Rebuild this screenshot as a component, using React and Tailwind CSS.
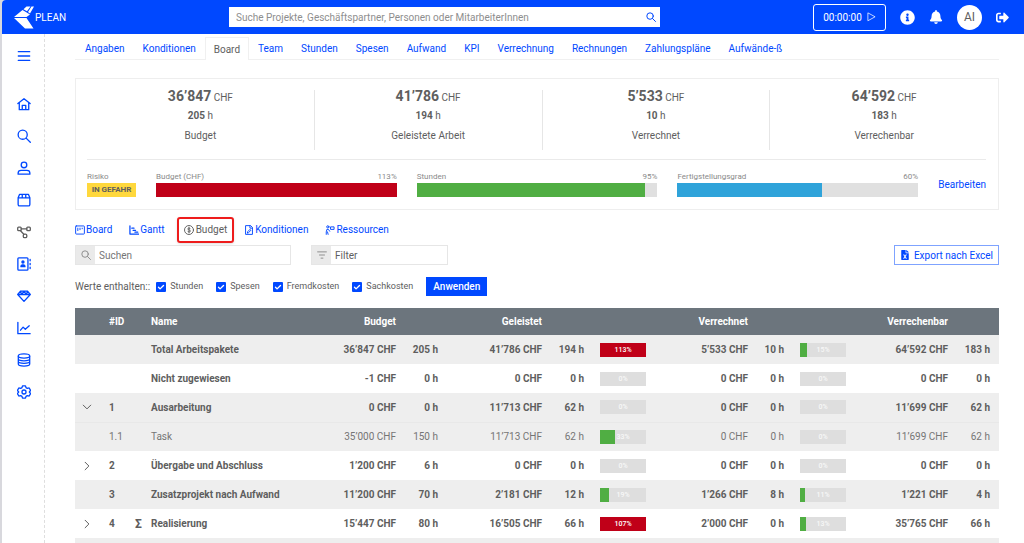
import {
  FaBell,
  FaFileExcel,
  FaInfoCircle,
  FaSignOutAlt,
} from 'react-icons/fa';

const tabs = [
  'Angaben', 'Konditionen', 'Board', 'Team', 'Stunden', 'Spesen', 'Aufwand', 'KPI',
  'Verrechnung', 'Rechnungen', 'Zahlungspläne', 'Aufwände-ß',
];

const stats = [
  { amount: '36’847', hours: '205', label: 'Budget' },
  { amount: '41’786', hours: '194', label: 'Geleistete Arbeit' },
  { amount: '5’533', hours: '10', label: 'Verrechnet' },
  { amount: '64’592', hours: '183', label: 'Verrechenbar' },
];

const progress = [
  { label: 'Budget (CHF)', value: 113, color: 'bg-[#c00018]' },
  { label: 'Stunden', value: 95, color: 'bg-[#50ae43]' },
  { label: 'Fertigstellungsgrad', value: 60, color: 'bg-[#2fa3da]' },
];

const rows = [
  { name: 'Total Arbeitspakete', budget: ['36’847', 205], done: ['41’786', 194, 113], billed: ['5’533', 10, 15], billable: ['64’592', 183], shaded: true },
  { name: 'Nicht zugewiesen', budget: ['-1', 0], done: ['0', 0, 0], billed: ['0', 0, 0], billable: ['0', 0] },
  { id: '1', name: 'Ausarbeitung', budget: ['0', 0], done: ['11’713', 62, 0], billed: ['0', 0, 0], billable: ['11’699', 62], shaded: true, open: true },
  { id: '1.1', name: 'Task', budget: ['35’000', 150], done: ['11’713', 62, 33], billed: ['0', 0, 0], billable: ['11’699', 62], shaded: true, child: true },
  { id: '2', name: 'Übergabe und Abschluss', budget: ['1’200', 6], done: ['0', 0, 0], billed: ['0', 0, 0], billable: ['0', 0], open: false },
  { id: '3', name: 'Zusatzprojekt nach Aufwand', budget: ['11’200', 70], done: ['2’181', 12, 19], billed: ['1’266', 8, 11], billable: ['1’221', 4], shaded: true },
  { id: '4', name: 'Realisierung', sum: true, budget: ['15’447', 80], done: ['16’505', 66, 107], billed: ['2’000', 0, 13], billable: ['35’765', 66], open: false },
];

function Icon({ className = 'size-3.5', width = 1.5, children }) {
  return (
    <svg
      viewBox="0 0 16 16"
      className={className}
      fill="none"
      stroke="currentColor"
      strokeWidth={width}
      strokeLinecap="round"
      strokeLinejoin="round"
      aria-hidden="true"
    >
      {children}
    </svg>
  );
}

const searchPath = (
  <>
    <circle cx="6.5" cy="6.5" r="5.2" />
    <path d="m10.4 10.4 4.8 4.8" />
  </>
);

const navItems = [
  { label: 'Start', icon: <path d="M1 7.5 8 2l7 5.5M2.6 6.5v8h10.8v-8M6 14V9.5h4V14" /> },
  { label: 'Suche', icon: searchPath },
  { label: 'Personen', icon: <><circle cx="8" cy="4.5" r="3.2" /><path d="M1.3 15v-1.2c0-1.8 1.5-3.1 3.3-3.1h6.8c1.8 0 3.3 1.3 3.3 3.1V15z" /></> },
  { label: 'Produkte', icon: <path d="M1.3 5.5 3 1.5h10l1.7 4V13a1.8 1.8 0 0 1-1.8 1.8H3.1A1.8 1.8 0 0 1 1.3 13zM1.3 5.500h13.400M6 1.500v4M10 1.500v4" /> },
  { label: 'Projekte', gray: true, icon: <><rect x=".8" y="2.5" width="4" height="4" rx="1" /><rect x="11.2" y="2.5" width="4" height="4" rx="1" /><rect x="7.2" y="10.5" width="4" height="4" rx="1.5" /><path d="M4.8 4.5h6.4M4 6.5l3.8 4" /></> },
  { label: 'Kontakte', icon: <><rect x="1" y="1" width="11.5" height="14" rx="1" /><path d="M15 2.8v1.600M15 7.200v1.600M15 11.600v1.600" /><circle cx="6.8" cy="5.8" r="1.2" fill="currentColor" /><path d="M4.5 11c0-2.800 4.600-2.800 4.600 0z" fill="currentColor" /></> },
  { label: 'Angebote', icon: <path d="M4 2.500h8l3.200 3.800L8 14.200.8 6.300zM.8 6.300h14.400M4 2.500l1.300 3.800L8 2.500l2.700 3.800L12 2.500" /> },
  { label: 'Berichte', icon: <path d="M1 1.500v13h14M4 10.500 7 7l2.500 2.500L14 5.500" /> },
  { label: 'Daten', icon: <><ellipse cx="8" cy="3.5" rx="6.5" ry="2.4" /><path d="M1.500 3.500v9c0 1.400 2.900 2.400 6.500 2.400s6.500-1 6.500-2.400v-9M1.500 6.500c0 1.400 2.900 2.400 6.500 2.400s6.500-1 6.500-2.400M1.500 9.500c0 1.400 2.900 2.400 6.500 2.400s6.500-1 6.500-2.400" /></> },
  { label: 'Einstellungen', icon: <><path d="M6.300 1h3.400l.6 2 1.500.9 2.100-.5 1.600 2.800L14.100 8l1.400 1.800-1.600 2.800-2.100-.5-1.500.9-.6 2H6.300l-.6-2-1.500-.9-2.100.5L.5 9.800 1.900 8 .5 6.200l1.600-2.800 2.100.5L5.700 3z" /><circle cx="8" cy="8" r="2.3" /></> },
];

const views = [
  { label: 'Board', icon: <><rect x="1" y="1.5" width="14" height="13" rx="1" /><path d="M4.500 5v4M8 5v2.500M11.500 5v1" /></> },
  { label: 'Gantt', icon: <path strokeWidth="2" d="M1.500 1.500v13h14M4.500 5H8M6.500 8.500h4M9.500 11.500H14" /> },
  { label: 'Budget', active: true, icon: <><circle cx="8" cy="8" r="7.2" /><path d="M10.200 6C9.500 4.500 6 4.500 6 6.300c0 2 4.300 1.200 4.300 3.300 0 2-3.800 2-4.500.4M8 3.500v9" /></> },
  { label: 'Konditionen', icon: <path d="M10 1H2.500v14h11V4.500zM9.500 1v4h4M5.500 12.500l.5-2L9.500 7 11 8.500 7.500 12z" /> },
  { label: 'Ressourcen', icon: <><circle cx="4.5" cy="3" r="1.8" /><path d="M2 15v-4l1-4h2.500l2 3M5 15l-1-4M9.500 3h5v4h-5z" /></> },
];

function Header() {
  return (
    <header className="flex h-[34px] items-center rounded-tl bg-[#0048ff] pr-[15px] pl-3 text-white">
      <a href="#" className="flex w-[215px] items-center gap-px">
        <svg viewBox="0 0 20 23" className="h-[23px] w-5" fill="currentColor" aria-hidden="true">
          <path d="M0 11 8.500 3.900 16 8.500 12.500 11zM0 12h12.500l7 10.500H11zM9.500 3.200 12.500.5h4l-3.500 4.800zM17.500.5H20l-4 7-2-1.500z" />
        </svg>
        PLEAN
      </a>
      <form className="flex h-5 w-[431px] items-center bg-white pr-1 text-[#0048ff]">
        <input
          type="search"
          aria-label="Suche"
          placeholder="Suche Projekte, Geschäftspartner, Personen oder MitarbeiterInnen"
          className="min-w-0 flex-1 px-[7px] outline-none placeholder:text-[#8e8e8e]"
        />
        <button type="button" aria-label="Suchen">
          <Icon className="size-2.5" width={1.6}>{searchPath}</Icon>
        </button>
      </form>
      <div className="ml-auto flex items-center">
        <button type="button" className="mr-3.5 flex h-[27px] w-[73px] items-center justify-center gap-1 rounded-[3px] border border-white">
          00:00:00
          <Icon className="size-2.5" width={1.2}><path d="M3 2v12l11-6z" /></Icon>
        </button>
        <button type="button" aria-label="Info" className="mr-3.5"><FaInfoCircle className="size-[15px]" /></button>
        <button type="button" aria-label="Benachrichtigungen" className="mr-3.5"><FaBell className="size-3.5" /></button>
        <button type="button" className="mr-3.5 size-[25px] rounded-full bg-white text-xs text-[#5e5e5e]">AI</button>
        <button type="button" aria-label="Abmelden">
          <FaSignOutAlt className="size-[13px]" />
        </button>
      </div>
    </header>
  );
}

function Sidebar() {
  return (
    <nav className="flex w-[43px] shrink-0 flex-col items-center border-r border-dashed border-[#dedede] pt-[15px] pl-0.5 text-[#0048ff]">
      <button type="button" aria-label="Menü" className="mb-[25px]">
        <Icon><path d="M1.500 3h13M1.500 8h13M1.500 13h13" /></Icon>
      </button>
      {navItems.map((item) => (
        <a key={item.label} href="#" aria-label={item.label} className={`flex h-8 items-center ${item.gray ? 'text-[#5e5e5e]' : ''}`}>
          <Icon>{item.icon}</Icon>
        </a>
      ))}
    </nav>
  );
}

function Tabs() {
  return (
    <nav className="flex h-[23px] border-b border-[#f0f0f0] pl-px text-[#0048ff]">
      {tabs.map((tab) => (
        <a
          key={tab}
          href="#"
          className={
            tab === 'Board'
              ? '-mb-px flex items-center border border-b-0 border-[#f0f0f0] bg-white px-2 text-[#5e5e5e]'
              : 'flex items-center px-[9px]'
          }
        >
          {tab}
        </a>
      ))}
    </nav>
  );
}

function Summary() {
  return (
    <section className="mt-[18px] h-[132px] border border-[#eee]">
      <div className="mt-[11px] ml-[11px] grid grid-cols-4">
        {stats.map((s) => (
          <div key={s.label} className="h-[60px] border-r border-[#e6e6e6] text-center last:border-r-0">
            <p className="h-5 leading-3"><b className="text-sm leading-3 font-bold">{s.amount}</b> CHF</p>
            <p className="h-5 leading-3"><b>{s.hours}</b> h</p>
            <p className="leading-3">{s.label}</p>
          </div>
        ))}
      </div>
      <div className="mr-3 ml-[11px] mt-[9px] flex gap-5 border-t border-[#eaeaea] pt-[11px]">
        <div className="text-[8px] text-[#8a8a8a]">
          <p className="leading-3">Risiko</p>
          <p className="flex h-3.5 w-[49px] items-center justify-center bg-[#ffd83d] font-bold text-[#5e5e5e]">IN GEFAHR</p>
        </div>
        {progress.map((p) => (
          <div key={p.label} className="flex-1 text-[8px] text-[#8a8a8a]">
            <p className="flex justify-between leading-3"><span>{p.label}</span><span>{p.value}%</span></p>
            <div className="h-3.5 bg-[#e0e0e0]">
              <div className={`h-full ${p.color}`} style={{ width: `${Math.min(p.value, 100)}%` }} />
            </div>
          </div>
        ))}
        <a href="#" className="self-center text-[#0048ff]">Bearbeiten</a>
      </div>
    </section>
  );
}

function Views() {
  return (
    <nav className="mt-1.5 flex h-[27px] items-center text-[#0048ff]">
      {views.map((v) => (
        <a
          key={v.label}
          href="#"
          className={
            v.active
              ? 'mr-2.5 ml-3 flex h-[26px] items-center gap-0.5 rounded-[3px] border-2 border-[#ee1c1c] px-[5px] text-[#5e5e5e] shadow'
              : 'mr-[17px] flex items-center gap-px [&:nth-child(2)]:mr-0'
          }
        >
          <Icon className="size-2.5">{v.icon}</Icon>
          {v.label}
        </a>
      ))}
    </nav>
  );
}

function Filters() {
  return (
    <div className="mt-0.5 flex">
      <label className="flex h-5 w-[216px] border border-[#e6e6e6]">
        <span className="flex w-[19px] items-center justify-center bg-[#eaeaea] text-[#8a8a8a]">
          <Icon className="size-2.5">{searchPath}</Icon>
        </span>
        <input type="text" aria-label="Suchen" placeholder="Suchen" className="min-w-0 flex-1 px-1 outline-none placeholder:text-[#757575]" />
      </label>
      <label className="ml-5 flex h-5 w-[137px] border border-[#e6e6e6]">
        <span className="flex w-[19px] items-center justify-center bg-[#eaeaea] text-[#8a8a8a]">
          <Icon className="size-2.5"><path d="M1 3h14M4 8h8M6.500 13h3" /></Icon>
        </span>
        <input type="text" aria-label="Filter" placeholder="Filter" className="min-w-0 flex-1 px-1 outline-none placeholder:text-[#5e5e5e]" />
      </label>
      <button type="button" className="ml-auto flex h-5 items-center gap-1 border border-[#7fa3ff] px-[5px] text-[#0048ff]">
        <FaFileExcel className="size-2.5" />
        Export nach Excel
      </button>
    </div>
  );
}

function Values() {
  return (
    <form className="mt-3 flex h-[19px] items-center">
      <span className="mr-1.5">Werte enthalten::</span>
      {['Stunden', 'Spesen', 'Fremdkosten', 'Sachkosten'].map((v) => (
        <label key={v} className="mr-[13px] flex items-center gap-1 text-[9px]">
          <span className="relative flex size-2.5">
            <input type="checkbox" defaultChecked className="size-2.5 appearance-none rounded-[1px] bg-[#0048ff]" />
            <Icon className="pointer-events-none absolute size-2.5 text-white" width={2.2}><path d="m4 8.500 2.500 2.500L12 5.500" /></Icon>
          </span>
          {v}
        </label>
      ))}
      <button type="button" className="h-[19px] w-[61px] bg-[#0048ff] font-medium text-white">Anwenden</button>
    </form>
  );
}

function Bar({ value }) {
  return (
    <div className="relative ml-auto h-3.5 w-[46px] bg-[#dedede]">
      <div className={`h-full ${value > 100 ? 'bg-[#c00018]' : 'bg-[#50ae43]'}`} style={{ width: `${Math.min(value, 100)}%` }} />
      <span className={`absolute inset-0 text-center text-[7px] leading-[15px] font-medium ${value > 100 ? 'text-white' : 'text-[#f8f8f8]'}`}>{value}%</span>
    </div>
  );
}

function Row({ row }) {
  return (
    <tr className={`h-[29px] text-right ${row.shaded ? 'bg-[#eee]' : ''} ${row.child ? 'border-t border-[#e8e8e8] font-normal text-[#757575]' : 'font-bold'}`}>
      <td className="pl-[7px] text-left">
        {row.open !== undefined && (
          <button type="button" aria-label={row.open ? 'Zuklappen' : 'Aufklappen'} className="block">
            <Icon className="size-2.5" width={1.6}><path d={row.open ? 'M2 5l6 6 6-6' : 'M5 2l6 6-6 6'} /></Icon>
          </button>
        )}
      </td>
      <td className="text-left">{row.id}</td>
      <td className="pl-0.5 text-left text-xs">{row.sum ? 'Σ' : ''}</td>
      <td className="text-left">{row.name}</td>
      <td>{row.budget[0]} CHF</td>
      <td>{row.budget[1]} h</td>
      <td>{row.done[0]} CHF</td>
      <td>{row.done[1]} h</td>
      <td><Bar value={row.done[2]} /></td>
      <td>{row.billed[0]} CHF</td>
      <td>{row.billed[1]} h</td>
      <td><Bar value={row.billed[2]} /></td>
      <td>{row.billable[0]} CHF</td>
      <td className="pr-[9px]">{row.billable[1]} h</td>
    </tr>
  );
}

function BudgetTable() {
  return (
    <table className="mt-3 w-full table-fixed whitespace-nowrap">
      <thead>
        <tr className="h-[27px] bg-[#6c757d] text-right font-bold text-white">
          <th className="w-[34px]" />
          <th className="w-6 text-left">#ID</th>
          <th className="w-[18px]" />
          <th className="text-left">Name</th>
          <th className="w-[70px]">Budget</th>
          <th className="w-[42px]" />
          <th className="w-[104px]">Geleistet</th>
          <th className="w-[42px]" />
          <th className="w-[62px]" />
          <th className="w-[102px]">Verrechnet</th>
          <th className="w-9" />
          <th className="w-[62px]" />
          <th className="w-[102px]">Verrechenbar</th>
          <th className="w-[51px]" />
        </tr>
      </thead>
      <tbody>
        {rows.map((row) => (
          <Row key={row.name} row={row} />
        ))}
        <tr className="h-[29px] bg-[#eee]"><td colSpan={14} /></tr>
      </tbody>
    </table>
  );
}

export default function App() {
  return (
    <div className="h-screen overflow-hidden bg-[#d8d8dd] pl-0.5 font-['Roboto',sans-serif] text-[10px] text-[#5e5e5e]">
      <div className="flex h-full flex-col rounded-tl bg-white">
        <Header />
        <div className="flex min-h-0 flex-1">
          <Sidebar />
          <main className="min-w-0 flex-1 pt-[3px] pr-[25px] pl-[30px]">
            <Tabs />
            <Summary />
            <Views />
            <Filters />
            <Values />
            <BudgetTable />
          </main>
        </div>
      </div>
    </div>
  );
}
